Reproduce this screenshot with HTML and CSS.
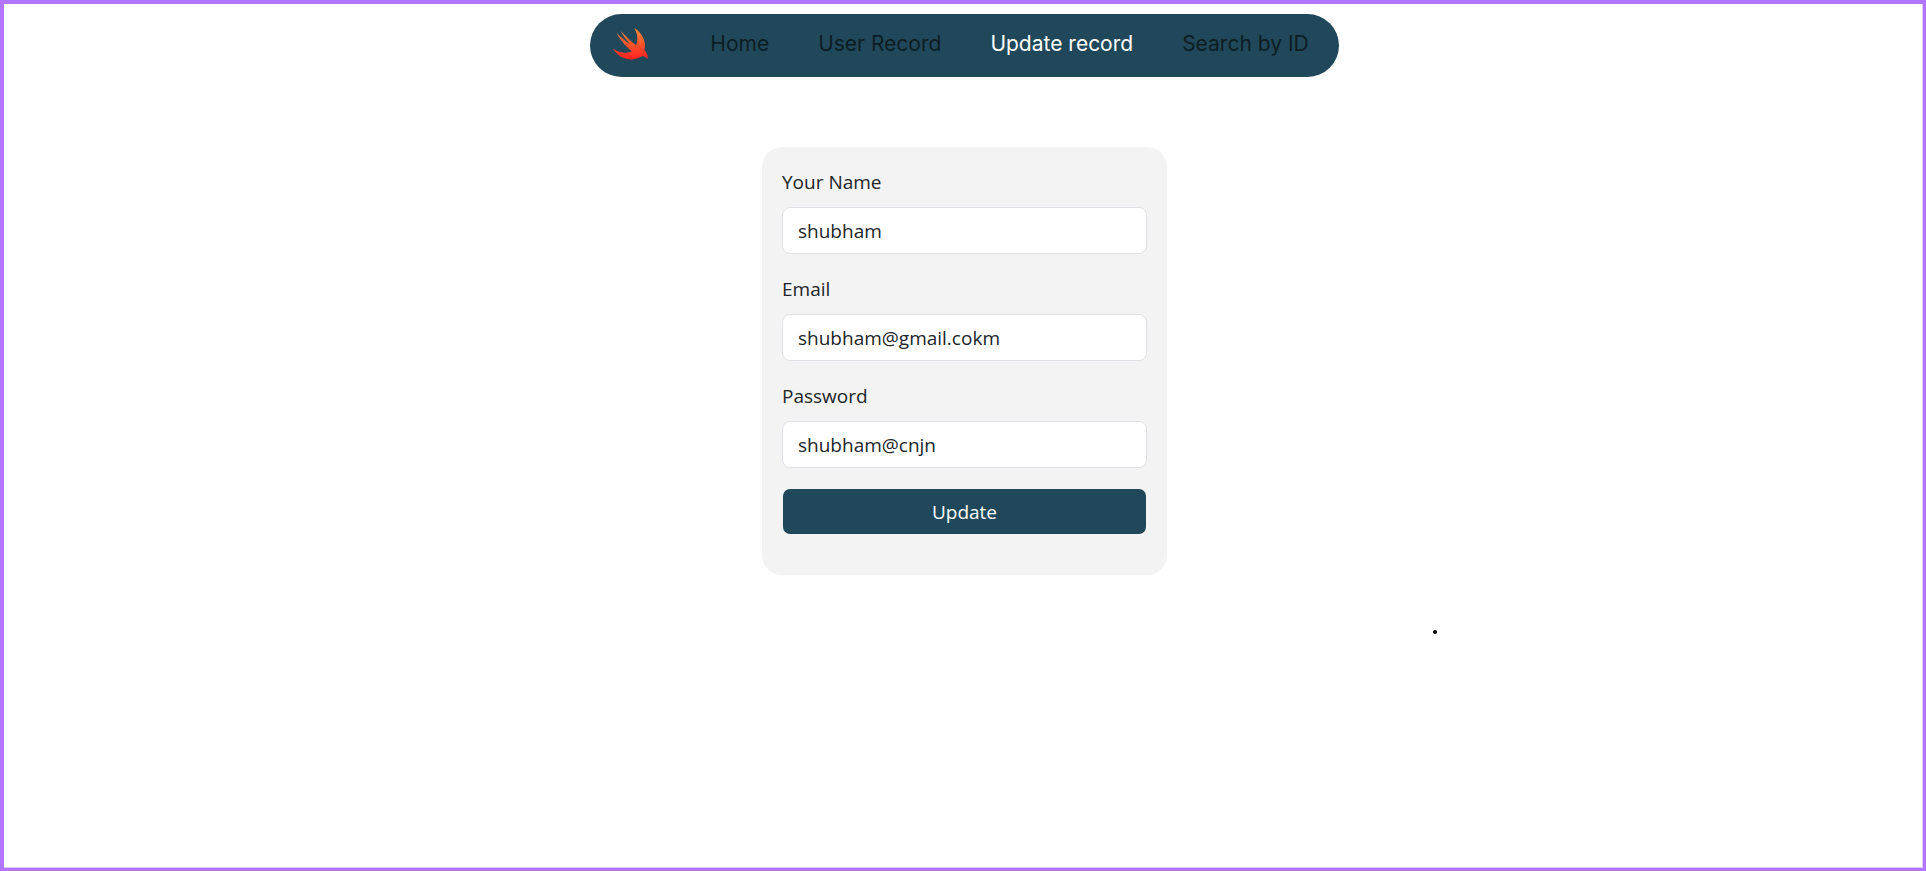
FILE: index.html
```html
<!DOCTYPE html>
<html lang="en">
<head>
<meta charset="utf-8">
<meta name="viewport" content="width=device-width, initial-scale=1">
<title>Update record</title>
<link rel="stylesheet" href="styles.css">
</head>
<body>
<header class="header">
  <nav class="nav" aria-label="Main">
    <a class="nav-logo" href="#" aria-label="Swift">
      <svg class="nav-bird" viewBox="0 0 108 99" aria-hidden="true">
        <defs>
          <linearGradient id="bird-fill" x1="0" y1="0" x2="0" y2="1">
            <stop offset="0" stop-color="#f88a36"/>
            <stop offset="1" stop-color="#fd2020"/>
          </linearGradient>
        </defs>
        <path fill="url(#bird-fill)" d="M67 3C91 17 104 45 97 69C106 79 109 89 106 96C99 85 91 87 84 91C55 106 20 93 3 65C22 77 43 81 60 73C42 59 25 38 13 17C26 30 42 43 54 52C44 40 33 26 26 12C40 26 56 42 72 55C79 39 77 21 67 3Z"/>
      </svg>
    </a>
    <ul class="nav-links">
      <li><a class="nav-link" href="#">Home</a></li>
      <li><a class="nav-link" href="#">User Record</a></li>
      <li><a class="nav-link nav-link-active" href="#" aria-current="page">Update record</a></li>
      <li><a class="nav-link" href="#">Search by ID</a></li>
    </ul>
  </nav>
</header>
<main class="main">
  <form class="card">
    <div class="field">
      <label class="label" for="name">Your Name</label>
      <input class="input" id="name" type="text" value="shubham">
    </div>
    <div class="field">
      <label class="label" for="email">Email</label>
      <input class="input" id="email" type="email" value="shubham@gmail.cokm">
    </div>
    <div class="field">
      <label class="label" for="password">Password</label>
      <input class="input" id="password" type="text" value="shubham@cnjn">
    </div>
    <button class="button" type="button">Update</button>
  </form>
  <div class="dot"></div>
</main>
</body>
</html>
```
FILE: styles.css
```css
* {
  box-sizing: border-box;
}

body {
  margin: 0;
  min-height: 100vh;
  padding: 10px 0 0 2px;
  border: 4px solid #b175ff;
  border-width: 4px 3px 3px 4px;
  box-shadow: inset -1px -1px #dfc6ff;
  background: #fff;
  color: #212529;
  font-family: "Open Sans", "Noto Sans", sans-serif;
  font-size: 19px;
  line-height: 30px;
}

.header {
  display: flex;
  justify-content: center;
}

.nav {
  display: flex;
  align-items: flex-start;
  gap: 62px;
  padding: 12px 30px 12px 22px;
  border-radius: 32px;
  background: #20485a;
  font-family: Inter, sans-serif;
  font-size: 21px;
}

.nav-logo {
  display: flex;
  height: 39px;
}

.nav-bird {
  width: 36px;
  height: 33px;
  margin-top: 1px;
}

.nav-links {
  display: flex;
  gap: 49px;
  margin: 0;
  padding: 3px 0 0;
  list-style: none;
}

.nav-link {
  color: #0d1d24;
  text-decoration: none;
  white-space: nowrap;
}

.nav-link-active {
  color: #fff;
}

.main {
  display: flex;
  flex-direction: column;
  align-items: center;
}

.card {
  width: 100%;
  max-width: 405px;
  margin-top: 70px;
  padding: 20px 20px 40px;
  border-radius: 20px;
  background: #f3f3f3;
}

.field {
  margin-bottom: 20px;
}

.label {
  display: block;
  margin-bottom: 10px;
}

.input {
  display: block;
  width: 100%;
  height: 47px;
  padding: 0 15px;
  border: 1px solid #dee2e6;
  border-radius: 8px;
  background: #fff;
  color: #212529;
  font: inherit;
}

.button {
  display: block;
  width: 100%;
  height: 47px;
  border: 1px solid transparent;
  border-radius: 8px;
  background: #20485a;
  background-clip: padding-box;
  color: #fff;
  font: inherit;
}

.dot {
  align-self: flex-start;
  width: 4px;
  height: 4px;
  margin: 55px 0 0 calc(50% + 468px);
  border-radius: 2px;
  background: #000;
}
```
